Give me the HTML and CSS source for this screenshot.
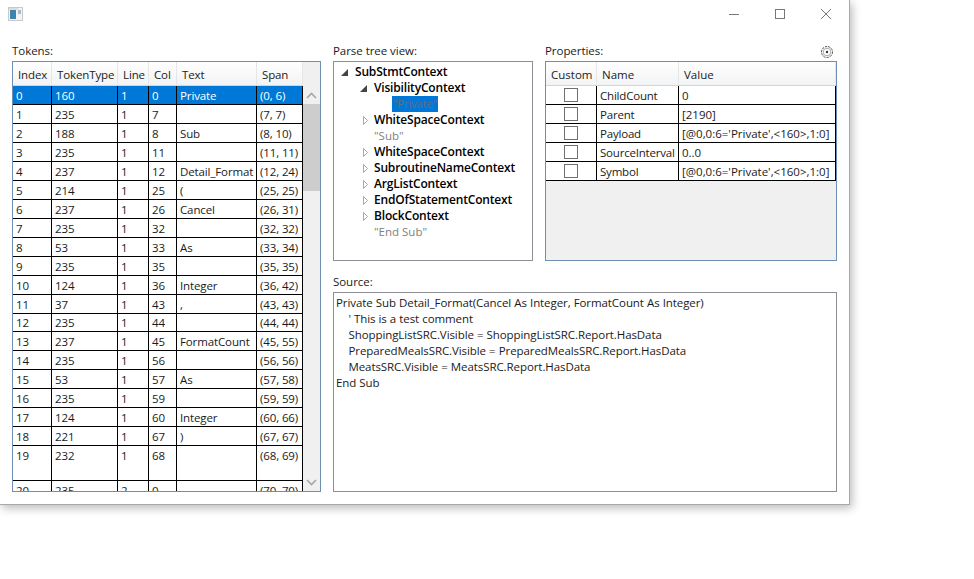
FILE: index.html
```html
<!DOCTYPE html>
<html lang="en">
<head>
<meta charset="utf-8">
<title>Parse tree</title>
<link rel="stylesheet" href="styles.css">
</head>
<body>
<div class="window">
  <header class="titlebar">
    <svg class="app-icon" width="15" height="14" viewBox="0 0 15 14"><rect x="0.5" y="0.5" width="14" height="13" fill="#f4f4f4" stroke="#c8c8c8"/><rect x="1" y="1" width="9" height="2" fill="#ddd"/><rect x="2" y="3" width="6" height="9" fill="#3f84b0"/><rect x="10" y="3" width="3" height="4" fill="#9cc0d8"/></svg>
    <div class="controls">
      <svg width="10" height="10" viewBox="0 0 10 10"><path d="M0 5.5H10" stroke="#777" fill="none"/></svg>
      <svg width="10" height="10" viewBox="0 0 10 10"><rect x="0.5" y="0.5" width="9" height="9" stroke="#777" fill="none"/></svg>
      <svg width="10" height="10" viewBox="0 0 10 10"><path d="M0 0L10 10M10 0L0 10" stroke="#777" fill="none"/></svg>
    </div>
  </header>
  <main class="content">
    <section class="tokens">
      <div class="label">Tokens:</div>
      <div class="box blue scroller">
        <div class="table-clip">
          <table class="grid">
            <colgroup><col class="c-index"><col class="c-type"><col class="c-line"><col class="c-col"><col class="c-text"><col class="c-span"></colgroup>
            <thead><tr><th>Index</th><th>TokenType</th><th>Line</th><th>Col</th><th>Text</th><th>Span</th></tr></thead>
            <tbody>
              <tr class="selected"><td>0</td><td>160</td><td>1</td><td>0</td><td>Private</td><td>(0, 6)</td></tr>
              <tr><td>1</td><td>235</td><td>1</td><td>7</td><td></td><td>(7, 7)</td></tr>
              <tr><td>2</td><td>188</td><td>1</td><td>8</td><td>Sub</td><td>(8, 10)</td></tr>
              <tr><td>3</td><td>235</td><td>1</td><td>11</td><td></td><td>(11, 11)</td></tr>
              <tr><td>4</td><td>237</td><td>1</td><td>12</td><td>Detail_Format</td><td>(12, 24)</td></tr>
              <tr><td>5</td><td>214</td><td>1</td><td>25</td><td>(</td><td>(25, 25)</td></tr>
              <tr><td>6</td><td>237</td><td>1</td><td>26</td><td>Cancel</td><td>(26, 31)</td></tr>
              <tr><td>7</td><td>235</td><td>1</td><td>32</td><td></td><td>(32, 32)</td></tr>
              <tr><td>8</td><td>53</td><td>1</td><td>33</td><td>As</td><td>(33, 34)</td></tr>
              <tr><td>9</td><td>235</td><td>1</td><td>35</td><td></td><td>(35, 35)</td></tr>
              <tr><td>10</td><td>124</td><td>1</td><td>36</td><td>Integer</td><td>(36, 42)</td></tr>
              <tr><td>11</td><td>37</td><td>1</td><td>43</td><td>,</td><td>(43, 43)</td></tr>
              <tr class="short"><td>12</td><td>235</td><td>1</td><td>44</td><td></td><td>(44, 44)</td></tr>
              <tr><td>13</td><td>237</td><td>1</td><td>45</td><td>FormatCount</td><td>(45, 55)</td></tr>
              <tr><td>14</td><td>235</td><td>1</td><td>56</td><td></td><td>(56, 56)</td></tr>
              <tr><td>15</td><td>53</td><td>1</td><td>57</td><td>As</td><td>(57, 58)</td></tr>
              <tr><td>16</td><td>235</td><td>1</td><td>59</td><td></td><td>(59, 59)</td></tr>
              <tr><td>17</td><td>124</td><td>1</td><td>60</td><td>Integer</td><td>(60, 66)</td></tr>
              <tr><td>18</td><td>221</td><td>1</td><td>67</td><td>)</td><td>(67, 67)</td></tr>
              <tr class="tall"><td>19</td><td>232</td><td>1</td><td>68</td><td></td><td>(68, 69)</td></tr>
              <tr><td>20</td><td>235</td><td>2</td><td>0</td><td></td><td>(70, 70)</td></tr>
            </tbody>
          </table>
        </div>
        <div class="scrollbar">
          <div class="sb-head"></div>
          <div class="sb-btn"><svg width="11" height="7" viewBox="0 0 11 7"><path d="M1 6L5.5 1.5L10 6" stroke="#a6a6a6" stroke-width="1.6" fill="none"/></svg></div>
          <div class="sb-thumb"></div>
          <div class="sb-track"></div>
          <div class="sb-btn"><svg width="11" height="7" viewBox="0 0 11 7"><path d="M1 1L5.5 5.5L10 1" stroke="#a6a6a6" stroke-width="1.6" fill="none"/></svg></div>
        </div>
      </div>
    </section>

    <section class="tree">
      <div class="label">Parse tree view:</div>
      <div class="box gray tree-box">
        <ul class="nodes">
          <li class="node"><svg class="arrow" width="7" height="7" viewBox="0 0 7 7"><path d="M7 0V7H0Z" fill="#444"/></svg><b>SubStmtContext</b></li>
          <li class="node lvl1"><svg class="arrow" width="7" height="7" viewBox="0 0 7 7"><path d="M7 0V7H0Z" fill="#444"/></svg><b>VisibilityContext</b></li>
          <li class="node lvl2"><span class="sel">"Private"</span></li>
          <li class="node lvl1"><svg class="arrow hollow" width="8" height="9" viewBox="0 0 8 9"><path d="M3.5 0.5L7.5 4.5L3.5 8.5Z" fill="#fff" stroke="#a6a6a6"/></svg><b>WhiteSpaceContext</b></li>
          <li class="node lvl1"><span class="no-arrow"></span><span class="term">"Sub"</span></li>
          <li class="node lvl1"><svg class="arrow hollow" width="8" height="9" viewBox="0 0 8 9"><path d="M3.5 0.5L7.5 4.5L3.5 8.5Z" fill="#fff" stroke="#a6a6a6"/></svg><b>WhiteSpaceContext</b></li>
          <li class="node lvl1"><svg class="arrow hollow" width="8" height="9" viewBox="0 0 8 9"><path d="M3.5 0.5L7.5 4.5L3.5 8.5Z" fill="#fff" stroke="#a6a6a6"/></svg><b>SubroutineNameContext</b></li>
          <li class="node lvl1"><svg class="arrow hollow" width="8" height="9" viewBox="0 0 8 9"><path d="M3.5 0.5L7.5 4.5L3.5 8.5Z" fill="#fff" stroke="#a6a6a6"/></svg><b>ArgListContext</b></li>
          <li class="node lvl1"><svg class="arrow hollow" width="8" height="9" viewBox="0 0 8 9"><path d="M3.5 0.5L7.5 4.5L3.5 8.5Z" fill="#fff" stroke="#a6a6a6"/></svg><b>EndOfStatementContext</b></li>
          <li class="node lvl1"><svg class="arrow hollow" width="8" height="9" viewBox="0 0 8 9"><path d="M3.5 0.5L7.5 4.5L3.5 8.5Z" fill="#fff" stroke="#a6a6a6"/></svg><b>BlockContext</b></li>
          <li class="node lvl1"><span class="no-arrow"></span><span class="term">"End Sub"</span></li>
        </ul>
      </div>
    </section>

    <section class="props">
      <div class="label label-row">Properties:
        <svg width="14" height="14" viewBox="0 0 14 14"><circle cx="7" cy="7" r="5.5" fill="none" stroke="#555" stroke-dasharray="2.4 0.9"/><circle cx="7" cy="7" r="3.8" fill="none" stroke="#aaa"/><circle cx="7" cy="7" r="1.2" fill="#333"/></svg>
      </div>
      <div class="box blue prop-box">
        <table class="grid">
          <colgroup><col class="p-custom"><col class="p-name"><col class="p-value"></colgroup>
          <thead><tr><th>Custom</th><th>Name</th><th>Value</th></tr></thead>
          <tbody>
            <tr><td class="chk"><span class="checkbox"></span></td><td>ChildCount</td><td>0</td></tr>
            <tr><td class="chk"><span class="checkbox"></span></td><td>Parent</td><td>[2190]</td></tr>
            <tr><td class="chk"><span class="checkbox"></span></td><td>Payload</td><td>[@0,0:6='Private',&lt;160&gt;,1:0]</td></tr>
            <tr><td class="chk"><span class="checkbox"></span></td><td>SourceInterval</td><td>0..0</td></tr>
            <tr><td class="chk"><span class="checkbox"></span></td><td>Symbol</td><td>[@0,0:6='Private',&lt;160&gt;,1:0]</td></tr>
          </tbody>
        </table>
      </div>
    </section>

    <section class="source">
      <div class="label">Source:</div>
      <div class="box gray code">Private Sub Detail_Format(Cancel As Integer, FormatCount As Integer)
    ' This is a test comment
    ShoppingListSRC.Visible = ShoppingListSRC.Report.HasData
    PreparedMealsSRC.Visible = PreparedMealsSRC.Report.HasData
    MeatsSRC.Visible = MeatsSRC.Report.HasData
End Sub</div>
    </section>
  </main>
</div>
</body>
</html>
```

FILE: styles.css
```css
* { box-sizing: border-box; }
html, body { margin: 0; padding: 0; background: #fff; }
body { width: 974px; height: 579px; overflow: hidden; font: 11.5px/16px "Open Sans", "Noto Sans", sans-serif; color: #1a1a1a; }

.window {
  width: 850px; height: 505px; background: #fff;
  border-right: 1px solid #a8a8a8; border-bottom: 1px solid #a8a8a8;
  box-shadow: 2px 3px 9px rgba(0,0,0,.28);
  display: flex; flex-direction: column;
}
.titlebar { height: 43px; flex: none; display: flex; justify-content: space-between; padding: 7px 18px 0 8px; }
.controls { display: flex; gap: 36px; padding-top: 2px; }
.app-icon { display: block; }

.content {
  display: grid;
  grid-template-columns: 309px 200px 292px;
  grid-template-rows: 218px 218px;
  column-gap: 12px;
  row-gap: 13px;
  padding-left: 12px;
}
.tokens { grid-row: 1 / 3; display: flex; flex-direction: column; min-height: 0; }
.tree, .props, .source { display: flex; flex-direction: column; }
.source { grid-column: 2 / 4; }

.label { height: 18px; flex: none; line-height: 16px; letter-spacing: -.05px; }
.label-row { display: flex; justify-content: space-between; align-items: flex-start; padding-right: 3px; }
.label-row svg { margin-top: 2px; }
.box { flex: 1; min-height: 0; border: 1px solid #abadb3; }
.box.blue { border-color: #6d8fb3; }
.box.gray { border-color: #8e8e96; }

.scroller { display: flex; overflow: hidden; }
.table-clip { width: 290px; flex: none; overflow: hidden; }

.grid { border-collapse: separate; border-spacing: 0; table-layout: fixed; width: 100%; }
.grid th {
  height: 24px; padding: 2px 0 0 5px; text-align: left; font-weight: 400; color: #222;
  background: linear-gradient(#fff, #f2f3f5);
  border-right: 1px solid #e6e6e6; border-bottom: 1px solid #d5d5d5;
  white-space: nowrap; overflow: hidden;
}
.grid td {
  height: 19px; padding: 1px 0 0 3px; line-height: 17px; vertical-align: top;
  border-right: 1px solid #000; border-bottom: 1px solid #000;
  white-space: nowrap; overflow: hidden;
}
.grid .selected td { background: #0078d7; color: #fff; }
.grid .tall td { height: 35px; }
.grid .short td { height: 18px; line-height: 16px; }

.c-index { width: 39px; } .c-type { width: 66px; } .c-line { width: 31px; }
.c-col { width: 28px; } .c-text { width: 80px; } .c-span { width: 46px; }
.tokens .grid { width: 290px; letter-spacing: -.12px; }

.scrollbar { width: 17px; flex: none; display: flex; flex-direction: column; background: #f0f0f0; }
.sb-head { height: 24px; flex: none; }
.sb-btn { height: 18px; flex: none; display: flex; align-items: center; justify-content: center; }
.sb-thumb { height: 87px; flex: none; background: #cdcdcd; }
.sb-track { flex: 1; }

.tree-box { padding: 2px 0 0 7px; }
.nodes { list-style: none; margin: 0; padding: 0; }
.node { height: 16px; display: flex; align-items: center; white-space: nowrap; color: #000; }
.node b { font-size: 12px; font-weight: 600; letter-spacing: -.18px; }
.arrow { flex: none; width: 7px; margin-right: 7px; }
.arrow.hollow { width: 8px; margin-right: 6px; }
.no-arrow { width: 14px; flex: none; }
.lvl1 { padding-left: 19px; }
.lvl2 { padding-left: 51px; }
.term { color: #808080; }
.sel { display: block; height: 16px; width: 46px; background: #0078d7; color: #5f6f85; padding: 0 1px; letter-spacing: -.25px; }

.prop-box { background: #f0f0f0; }
.prop-box .grid { width: 290px; background: #fff; }
.prop-box td:nth-child(2) { letter-spacing: -.2px; }
.p-custom { width: 51px; } .p-name { width: 82px; } .p-value { width: 157px; }
.chk { text-align: center; }
.grid td.chk { padding: 0; }
.checkbox { display: inline-block; width: 14px; height: 14px; border: 1px solid #707070; background: #fff; vertical-align: top; margin-top: 2px; }

.code { white-space: pre; padding: 2px 2px; color: #1a1a1a; letter-spacing: -.08px; word-spacing: .2px; }
```
